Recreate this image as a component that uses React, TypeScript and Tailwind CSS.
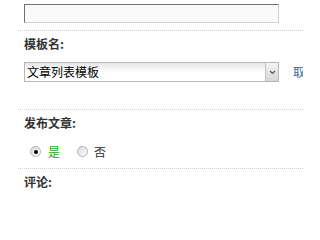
import React from 'react';

const font = '[font-family:"Noto_Sans_CJK_SC","Noto_Sans",sans-serif]';

const Radio: React.FC<{ checked?: boolean }> = ({ checked }) => (
  <span className="w-[11px] h-[11px] rounded-full border border-[#b0b0b0] bg-gradient-to-br from-[#d8d8d8] to-[#ffffff] flex items-center justify-center">
    {checked && <span className="w-[4px] h-[4px] rounded-full bg-black" />}
  </span>
);

const App: React.FC = () => {
  return (
    <div className={`w-[303px] h-[201px] overflow-hidden bg-white pl-[18px] text-[12px] leading-[12px] ${font}`}>
      <div className="pt-[4px] pb-[7px] pl-[6px]">
        <div className="w-[255px] h-[19px] bg-[#fafafa] border border-t-[#707070] border-l-[#707070] border-r-[#d0d0d0] border-b-[#d0d0d0]" />
      </div>

      <div className="border-t border-dotted border-[#c5d3e0] pl-[6px] pt-[7px] pb-[27px]">
        <div className="font-bold text-[#333]">模板名:</div>
        <div className="mt-[12px] flex items-center">
          <div className="w-[255px] h-[20px] shrink-0 flex border border-[#b5b8c0] bg-white">
            <div className="flex-1 flex items-center pl-[2px] text-black bg-gradient-to-b from-[#e6e6e6] via-white to-white">
              文章列表模板
            </div>
            <div className="w-[13px] h-full border-l border-[#c0c0c0] bg-gradient-to-b from-[#f4f4f4] to-[#d6d6d6] flex items-center justify-center">
              <svg width="7" height="5" viewBox="0 0 7 5">
                <path d="M1 1l2.5 2.5L6 1" stroke="#555" strokeWidth="1.2" fill="none" />
              </svg>
            </div>
          </div>
          <span className="ml-[14px] shrink-0 text-[#336699] whitespace-nowrap">取消</span>
        </div>
      </div>

      <div className="border-t border-dotted border-[#c5d3e0] pl-[6px] pt-[7px] pb-[10px]">
        <div className="font-bold text-[#333]">发布文章:</div>
        <div className="mt-[16px] h-[13px] flex items-center pl-[6px]">
          <Radio checked />
          <span className="ml-[7px] text-[#22aa22]">是</span>
          <span className="ml-[17px]">
            <Radio />
          </span>
          <span className="ml-[6px] text-[#333]">否</span>
        </div>
      </div>

      <div className="border-t border-dotted border-[#c5d3e0] pl-[6px] pt-[7px]">
        <div className="font-bold text-[#333]">评论:</div>
      </div>
    </div>
  );
};

export default App;
